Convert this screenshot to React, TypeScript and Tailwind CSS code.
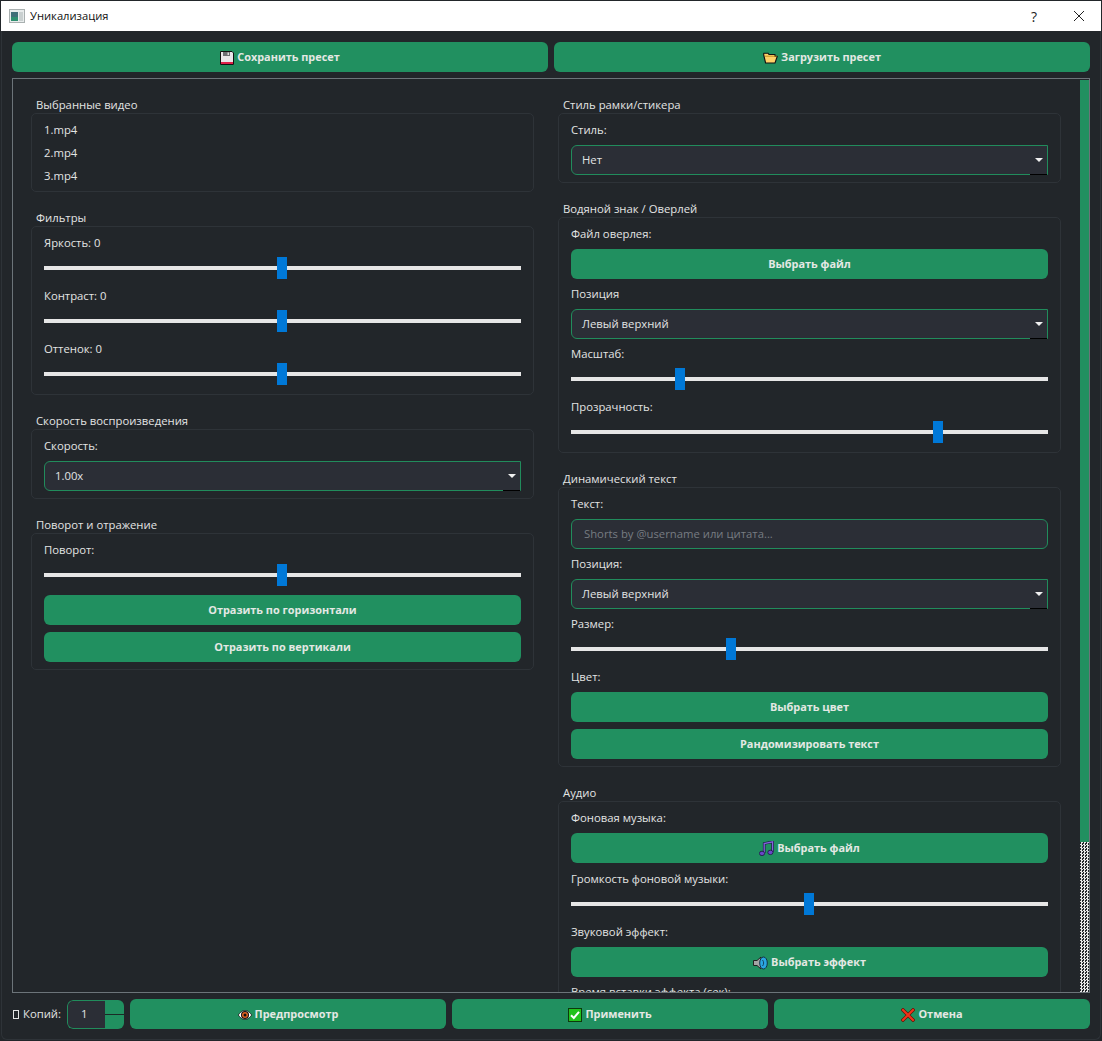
import React from "react";

const font = { fontFamily: '"Open Sans", "Noto Sans", sans-serif' };

function Floppy() {
  return (
    <svg width="14" height="14" viewBox="0 0 14 14" className="shrink-0">
      <path d="M0.5 0.5H12L13.5 2V13.5H0.5Z" fill="#e9e6ea" stroke="#111" />
      <rect x="3" y="1" width="7" height="4" fill="#6d6d72" />
      <rect x="7.5" y="1.5" width="1.5" height="2.5" fill="#ddd" />
      <rect x="1" y="11" width="12" height="2" fill="#e0204a" />
    </svg>
  );
}
function Folder() {
  return (
    <svg width="15" height="12" viewBox="0 0 15 12" className="shrink-0">
      <path d="M0.7 1.2H5L6 2.5H12V4.2H14.3L12 11H2.6L0.7 3Z" fill="#ffd268" stroke="#111" strokeWidth="1.1" strokeLinejoin="round" />
      <path d="M2 4.2H14" stroke="#b07a10" strokeWidth="0.8" />
    </svg>
  );
}
function Eye() {
  return (
    <svg width="14" height="10" viewBox="0 0 14 10" className="shrink-0">
      <path d="M0.3 5C3 1.2 5 0.5 7 0.5S11 1.2 13.7 5C11 8.8 9 9.5 7 9.5S3 8.8 0.3 5Z" fill="#fff" stroke="#111" strokeWidth="0.8" />
      <circle cx="7" cy="5" r="4" fill="#111" />
      <circle cx="7" cy="5" r="3" fill="#e0601f" />
      <circle cx="7" cy="5" r="1.5" fill="#111" />
    </svg>
  );
}
function Music() {
  return (
    <svg width="15" height="15" viewBox="0 0 15 15" className="shrink-0">
      <path d="M5.2 12V2.6L13.6 0.8V11" fill="none" stroke="#1b1640" strokeWidth="2.6" />
      <path d="M5.2 12V2.6L13.6 0.8V11" fill="none" stroke="#8263dc" strokeWidth="1.3" />
      <ellipse cx="3" cy="12.4" rx="2.6" ry="2.2" fill="#6a48c8" stroke="#1b1640" strokeWidth="0.8" />
      <ellipse cx="11.4" cy="11.4" rx="2.6" ry="2.2" fill="#6a48c8" stroke="#1b1640" strokeWidth="0.8" />
    </svg>
  );
}
function Speaker() {
  return (
    <svg width="15" height="14" viewBox="0 0 15 14" className="shrink-0">
      <path d="M0.5 4.5H4L8 1V13L4 9.5H0.5Z" fill="#a4a4a4" stroke="#222" strokeWidth="1" />
      <ellipse cx="10.5" cy="7" rx="3.8" ry="6" fill="#2aa6e0" stroke="#12324a" strokeWidth="1" />
      <path d="M9.5 4C11 5.5 11 8.5 9.5 10" fill="none" stroke="#123a55" strokeWidth="0.9" />
    </svg>
  );
}
function Check() {
  return (
    <svg width="14" height="14" viewBox="0 0 14 14" className="shrink-0">
      <rect x="0.5" y="0.5" width="13" height="13" fill="#22c21c" stroke="#0c3a0c" />
      <path d="M3 7.2L5.8 10L11 3.8" fill="none" stroke="#fff" strokeWidth="2" />
    </svg>
  );
}
function Cross() {
  return (
    <svg width="14" height="14" viewBox="0 0 14 14" className="shrink-0">
      <path d="M2 2L12 12M12 2L2 12" stroke="#5a1208" strokeWidth="3.4" strokeLinecap="square" />
      <path d="M2 2L12 12M12 2L2 12" stroke="#f0331a" strokeWidth="2.2" strokeLinecap="square" />
    </svg>
  );
}
function AppIcon() {
  return (
    <svg width="16" height="14" viewBox="0 0 16 14" className="shrink-0">
      <rect x="0.5" y="0.5" width="15" height="13" fill="#e8ecec" stroke="#a9b0b0" />
      <rect x="2" y="3" width="7" height="9" fill="#3f6f78" />
      <rect x="2" y="8" width="7" height="4" fill="#2f8f70" />
      <rect x="10" y="3" width="4" height="9" fill="#c9d0d0" />
    </svg>
  );
}

function Btn({ children, className = "" }: { children: React.ReactNode; className?: string }) {
  return (
    <div className={`h-[30px] pt-px rounded-[6px] bg-[#219060] flex items-center justify-center gap-[3px] text-[10.9px] font-bold text-[#e4e8e4] ${className}`}>
      {children}
    </div>
  );
}

function Label({ children, mt = "" }: { children: React.ReactNode; mt?: string }) {
  return <div className={`h-4 leading-4 text-[11.3px] text-[#e2e4e4] ${mt}`}>{children}</div>;
}

function Slider({ value }: { value: number }) {
  return (
    <div className="mt-[2px] mb-[5px] h-[30px] relative flex items-center">
      <div className="w-full h-[4px] bg-[#e6e6e6]" />
      <div
        className="absolute top-[4px] w-[10px] h-[22px] bg-[#0078d7]"
        style={{ left: `calc((100% - 10px) * ${value})` }}
      />
    </div>
  );
}

function Combo({ text, className = "" }: { text: string; className?: string }) {
  return (
    <div className={`relative h-[30px] rounded-l-[6px] border border-[#218c5c] bg-[#2b2e36] flex items-center pl-[10px] text-[11.3px] text-[#e2e4e4] ${className}`}>
      {text}
      <div className="absolute right-[4px] top-[12px] w-0 h-0 border-x-[4px] border-x-transparent border-t-[4px] border-t-[#f0f0f0]" />
      <div className="absolute right-0 bottom-[-1px] w-[17px] h-px bg-black" />
    </div>
  );
}

function Group({ title, children, className = "" }: { title: string; children: React.ReactNode; className?: string }) {
  return (
    <div className="flex flex-col">
      <div className="h-4 leading-4 pl-[5px] text-[11.3px] text-[#e2e4e4]">{title}</div>
      <div className={`border border-[#2e3338] rounded-[5px] px-3 pt-2 flex flex-col ${className}`}>{children}</div>
    </div>
  );
}

export default function App() {
  return (
    <div style={font} className="w-[1102px] h-[1041px] bg-[#22262a] flex flex-col overflow-hidden">
      <div className="h-px bg-[#22262a]" />
      <div className="h-[30px] mx-px bg-white flex items-center shrink-0">
        <div className="ml-2 mr-[5px]">
          <AppIcon />
        </div>
        <span className="text-[11.2px] text-[#111]">Уникализация</span>
        <span className="ml-auto text-[14px] text-[#222] mr-[36px]">?</span>
        <svg width="12" height="12" viewBox="0 0 12 12" className="mr-[16px]">
          <path d="M1 1L11 11M11 1L1 11" stroke="#222" strokeWidth="1" fill="none" />
        </svg>
      </div>

      <div className="flex-1 min-h-0 mx-px mb-px border-x border-b border-[#2e3338] rounded-b-[6px] flex flex-col px-[10px] pt-[11px]">
        <div className="flex gap-[6px] shrink-0">
          <Btn className="flex-1">
            <Floppy />
            Сохранить пресет
          </Btn>
          <Btn className="flex-1">
            <Folder />
            Загрузить пресет
          </Btn>
        </div>

        <div className="mt-[6px] h-[915px] shrink-0 border border-[#6c7479] flex overflow-hidden">
          <div className="flex-1 min-w-0 pt-[18px] pl-[18px] flex gap-[24px] overflow-hidden">
            <div className="w-[503px] shrink-0 flex flex-col gap-[18px]">
              <Group title="Выбранные видео" className="!pt-[4px] pb-[4px]">
                <div className="h-[23px] leading-[23px] text-[11.3px] text-[#e2e4e4]">1.mp4</div>
                <div className="h-[23px] leading-[23px] text-[11.3px] text-[#e2e4e4]">2.mp4</div>
                <div className="h-[23px] leading-[23px] text-[11.3px] text-[#e2e4e4]">3.mp4</div>
              </Group>
              <Group title="Фильтры">
                <Label>Яркость: 0</Label>
                <Slider value={0.4979} />
                <Label>Контраст: 0</Label>
                <Slider value={0.4979} />
                <Label>Оттенок: 0</Label>
                <Slider value={0.4979} />
              </Group>
              <Group title="Скорость воспроизведения" className="pb-[7px]">
                <Label>Скорость:</Label>
                <Combo text="1.00x" className="mt-[7px]" />
              </Group>
              <Group title="Поворот и отражение" className="pb-[7px]">
                <Label>Поворот:</Label>
                <Slider value={0.4979} />
                <Btn>Отразить по горизонтали</Btn>
                <Btn className="mt-[7px]">Отразить по вертикали</Btn>
              </Group>
            </div>

            <div className="w-[503px] shrink-0 flex flex-col gap-[18px]">
              <Group title="Стиль рамки/стикера" className="pb-[7px]">
                <Label>Стиль:</Label>
                <Combo text="Нет" className="mt-[7px]" />
              </Group>
              <Group title="Водяной знак / Оверлей">
                <Label>Файл оверлея:</Label>
                <Btn className="mt-[7px]">Выбрать файл</Btn>
                <Label mt="mt-[7px]">Позиция</Label>
                <Combo text="Левый верхний" className="mt-[7px]" />
                <Label mt="mt-[7px]">Масштаб:</Label>
                <Slider value={0.2227} />
                <Label>Прозрачность:</Label>
                <Slider value={0.775} />
              </Group>
              <Group title="Динамический текст" className="pb-[7px]">
                <Label>Текст:</Label>
                <div className="mt-[7px] h-[30px] rounded-[6px] border border-[#218c5c] bg-[#2b2e36] flex items-center pl-3 text-[11.3px] text-[#777c82]">
                  Shorts by @username или цитата...
                </div>
                <Label mt="mt-[7px]">Позиция:</Label>
                <Combo text="Левый верхний" className="mt-[7px]" />
                <Label mt="mt-[7px]">Размер:</Label>
                <Slider value={0.332} />
                <Label>Цвет:</Label>
                <Btn className="mt-[7px]">Выбрать цвет</Btn>
                <Btn className="mt-[7px]">Рандомизировать текст</Btn>
              </Group>
              <Group title="Аудио">
                <Label>Фоновая музыка:</Label>
                <Btn className="mt-[7px]">
                  <Music />
                  Выбрать файл
                </Btn>
                <Label mt="mt-2">Громкость фоновой музыки:</Label>
                <Slider value={0.499} />
                <Label>Звуковой эффект:</Label>
                <Btn className="mt-[7px]">
                  <Speaker />
                  Выбрать эффект
                </Btn>
                <Label mt="mt-[7px]">Время вставки эффекта (сек):</Label>
              </Group>
            </div>
          </div>

          <div className="w-[9px] shrink-0 mt-px flex flex-col">
            <div className="h-[762px] bg-[#219060]" />
            <div className="flex-1 bg-[repeating-conic-gradient(#e8e8e8_0_25%,#22262a_0_50%)] bg-[length:3px_3px]" />
          </div>
        </div>

        <div className="mt-[6px] flex items-center gap-[6px] shrink-0">
          <div className="w-[49px] shrink-0 flex items-center gap-[4px] text-[11.3px] text-[#e2e4e4] pl-px">
            <span className="w-[6px] h-[9px] border border-[#e2e4e4] shrink-0" />
            Копий:
          </div>
          <div className="flex h-[29px] w-[57px] shrink-0 rounded-[6px] overflow-hidden">
            <div className="w-[38px] bg-[#2b2e36] border border-r-0 border-[#218c5c] rounded-l-[6px] flex items-center pl-[13px] text-[11.3px] text-[#e2e4e4]">
              1
            </div>
            <div className="flex-1 flex flex-col">
              <div className="flex-1 bg-[#219060]" />
              <div className="h-px bg-[#1b2a26]" />
              <div className="flex-1 bg-[#219060]" />
            </div>
          </div>
          <Btn className="flex-1">
            <Eye />
            Предпросмотр
          </Btn>
          <Btn className="flex-1">
            <Check />
            Применить
          </Btn>
          <Btn className="flex-1">
            <Cross />
            Отмена
          </Btn>
        </div>
      </div>
    </div>
  );
}
